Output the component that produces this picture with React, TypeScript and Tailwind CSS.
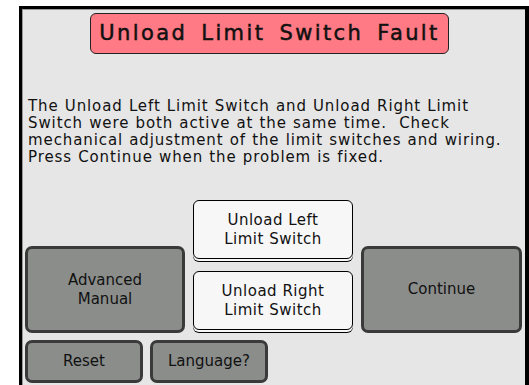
const font = { fontFamily: '"DejaVu Sans", sans-serif' };

function GrayButton({ label, className }: { label: React.ReactNode; className: string }) {
  return (
    <div
      className={`flex items-center justify-center rounded-[7px] border-[3px] border-[#3a3a3a] bg-[#8b8d8b] text-center text-[15px] leading-[19px] text-[#111] ${className}`}
    >
      {label}
    </div>
  );
}

function WhiteButton({ label }: { label: React.ReactNode }) {
  return (
    <div className="flex h-[59px] w-[160px] items-center justify-center rounded-[6px] border-[1.5px] border-black bg-[#f7f7f7] text-center text-[15px] leading-[19px] tracking-[0.5px] text-[#111] shadow-[0_2px_0_#f7f7f7,0_3px_0_#000]">
      {label}
    </div>
  );
}

export default function App() {
  return (
    <div className="h-[385px] w-[529px] overflow-hidden bg-white" style={font}>
      <div className="ml-[19px] mt-[6px] h-[379px] w-[510px] border-l-[3px] border-r-[4px] border-t-[3px] border-black bg-[#e6e6e6] shadow-[inset_1px_1px_0_#9a9a9a]">
        <div className="ml-[68px] mt-[4px] flex h-[41px] w-[359px] items-center justify-center rounded-[6px] border border-[#222] bg-[#ff7a84] text-[21px] tracking-[2.4px] text-[#111] [-webkit-text-stroke:0.5px_#111] [word-spacing:5px]">
          Unload Limit Switch Fault
        </div>

        <p className="ml-[6px] mt-[44px] text-[15px] leading-[17px] tracking-[0.9px] text-[#111] [word-spacing:0.5px]">
          The Unload Left Limit Switch and Unload Right Limit
          <br />
          Switch were both active at the same time.&nbsp; Check
          <br />
          mechanical adjustment of the limit switches and wiring.
          <br />
          Press Continue when the problem is fixed.
        </p>

        <div className="ml-[3px] mt-[34px] flex items-end gap-[8px]">
          <GrayButton
            className="h-[87px] w-[160px]"
            label={
              <span>
                Advanced
                <br />
                Manual
              </span>
            }
          />
          <div className="flex flex-col gap-[12px] pb-[3px]">
            <WhiteButton
              label={
                <span>
                  Unload Left
                  <br />
                  Limit Switch
                </span>
              }
            />
            <WhiteButton
              label={
                <span>
                  Unload Right
                  <br />
                  Limit Switch
                </span>
              }
            />
          </div>
          <GrayButton className="h-[87px] w-[161px]" label="Continue" />
        </div>

        <div className="ml-[3px] mt-[7px] flex gap-[7px]">
          <GrayButton className="h-[43px] w-[118px]" label="Reset" />
          <GrayButton className="h-[43px] w-[118px]" label="Language?" />
        </div>
      </div>
    </div>
  );
}
